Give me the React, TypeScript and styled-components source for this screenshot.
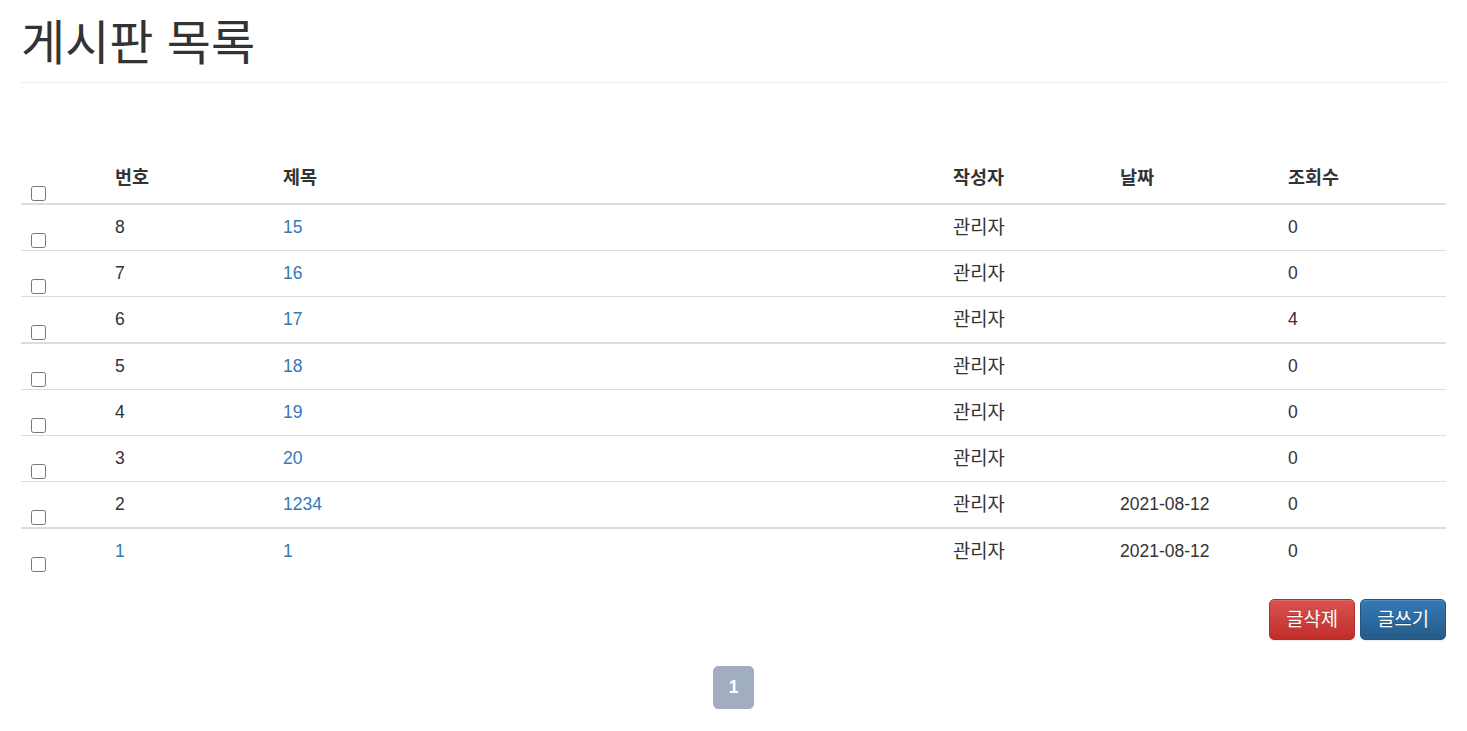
import React from 'react'
import styled, { createGlobalStyle } from 'styled-components'

const GlobalStyle = createGlobalStyle`
  html, body {
    margin: 0;
    padding: 0;
    background: #fff;
  }
  body {
    font-family: "Liberation Sans", "Noto Sans CJK KR", sans-serif;
    font-size: 17.5px;
    line-height: 1.42857;
    color: #333;
  }
`

const Page = styled.div`
  padding: 0 21px 30px;
`

const Title = styled.h1`
  margin: 18px 0 0;
  padding-bottom: 11px;
  font-size: 48px;
  font-weight: 400;
  line-height: 1.1;
  color: #333;
  border-bottom: 1px solid #eee;
`

const Table = styled.table`
  width: 100%;
  margin-top: 72px;
  border-collapse: collapse;
  border-spacing: 0;
  table-layout: fixed;
`

const Th = styled.th`
  padding: 10px 10px 13px;
  text-align: left;
  vertical-align: bottom;
  font-size: 18.5px;
  font-weight: bold;
  line-height: 25px;
  border-bottom: 2px solid #ddd;
`

const Td = styled.td<{ $thick?: boolean; $ko?: boolean }>`
  padding: 10px;
  font-size: ${(p) => (p.$ko ? '18.8px' : '17.5px')};
  line-height: 25px;
  vertical-align: top;
  border-top: ${(p) => (p.$thick ? '2px' : '1px')} solid #ddd;
`

const CheckCell = styled(Td)`
  vertical-align: bottom;
  padding-bottom: 2px;
`

const CheckHead = styled(Th)`
  padding-bottom: 2px;
`

const Check = styled.input.attrs({ type: 'checkbox' })`
  display: block;
  width: 15px;
  height: 15px;
  margin: 0;
`

const Link = styled.a`
  color: #337ab7;
  text-decoration: none;
`

const Actions = styled.div`
  display: flex;
  justify-content: flex-end;
  gap: 5px;
  margin-top: 25px;
`

const Button = styled.button<{ $variant: 'danger' | 'primary' }>`
  font-family: inherit;
  font-size: 18.8px;
  line-height: 25px;
  padding: 7px 16px;
  color: #fff;
  border-radius: 5px;
  cursor: pointer;
  border: 1px solid ${(p) => (p.$variant === 'danger' ? '#b92c28' : '#245580')};
  background-image: ${(p) =>
    p.$variant === 'danger'
      ? 'linear-gradient(to bottom, #d9534f 0, #c12e2a 100%)'
      : 'linear-gradient(to bottom, #337ab7 0, #265a88 100%)'};
  box-shadow: inset 0 1px 0 rgba(255, 255, 255, 0.15), 0 1px 1px rgba(0, 0, 0, 0.075);
  text-shadow: 0 -1px 0 rgba(0, 0, 0, 0.2);
`

const Pager = styled.ul`
  display: flex;
  justify-content: center;
  list-style: none;
  margin: 26px 0 0;
  padding: 0;
`

const PageItem = styled.li<{ $active?: boolean }>`
  min-width: 41px;
  box-sizing: border-box;
  padding: 8px 15px;
  line-height: 25px;
  text-align: center;
  font-weight: bold;
  color: #fff;
  background: ${(p) => (p.$active ? '#a0aebf' : '#fff')};
  border: 1px solid ${(p) => (p.$active ? '#a0aebf' : '#ddd')};
  border-radius: 5px;
`

type Post = { no: number; title: string; writer: string; date: string; views: number; link?: boolean }

const groups: Post[][] = [
  [
    { no: 8, title: '15', writer: '관리자', date: '', views: 0 },
    { no: 7, title: '16', writer: '관리자', date: '', views: 0 },
    { no: 6, title: '17', writer: '관리자', date: '', views: 4 },
  ],
  [
    { no: 5, title: '18', writer: '관리자', date: '', views: 0 },
    { no: 4, title: '19', writer: '관리자', date: '', views: 0 },
    { no: 3, title: '20', writer: '관리자', date: '', views: 0 },
    { no: 2, title: '1234', writer: '관리자', date: '2021-08-12', views: 0 },
  ],
  [{ no: 1, title: '1', writer: '관리자', date: '2021-08-12', views: 0, link: true }],
]

export default function App() {
  return (
    <>
      <GlobalStyle />
      <Page>
        <Title>게시판 목록</Title>
        <Table>
          <colgroup>
            <col style={{ width: 84 }} />
            <col style={{ width: 168 }} />
            <col />
            <col style={{ width: 167 }} />
            <col style={{ width: 168 }} />
            <col style={{ width: 168 }} />
          </colgroup>
          <thead>
            <tr>
              <CheckHead>
                <Check />
              </CheckHead>
              <Th>번호</Th>
              <Th>제목</Th>
              <Th>작성자</Th>
              <Th>날짜</Th>
              <Th>조회수</Th>
            </tr>
          </thead>
          {groups.map((rows, gi) => (
            <tbody key={gi}>
              {rows.map((r, ri) => {
                const thick = gi > 0 && ri === 0
                return (
                  <tr key={r.no}>
                    <CheckCell $thick={thick}>
                      <Check />
                    </CheckCell>
                    <Td $thick={thick}>{r.link ? <Link href="#">{r.no}</Link> : r.no}</Td>
                    <Td $thick={thick}>
                      <Link href="#">{r.title}</Link>
                    </Td>
                    <Td $thick={thick} $ko>
                      {r.writer}
                    </Td>
                    <Td $thick={thick}>{r.date}</Td>
                    <Td $thick={thick}>{r.views}</Td>
                  </tr>
                )
              })}
            </tbody>
          ))}
        </Table>
        <Actions>
          <Button $variant="danger">글삭제</Button>
          <Button $variant="primary">글쓰기</Button>
        </Actions>
        <Pager>
          <PageItem $active>1</PageItem>
        </Pager>
      </Page>
    </>
  )
}
